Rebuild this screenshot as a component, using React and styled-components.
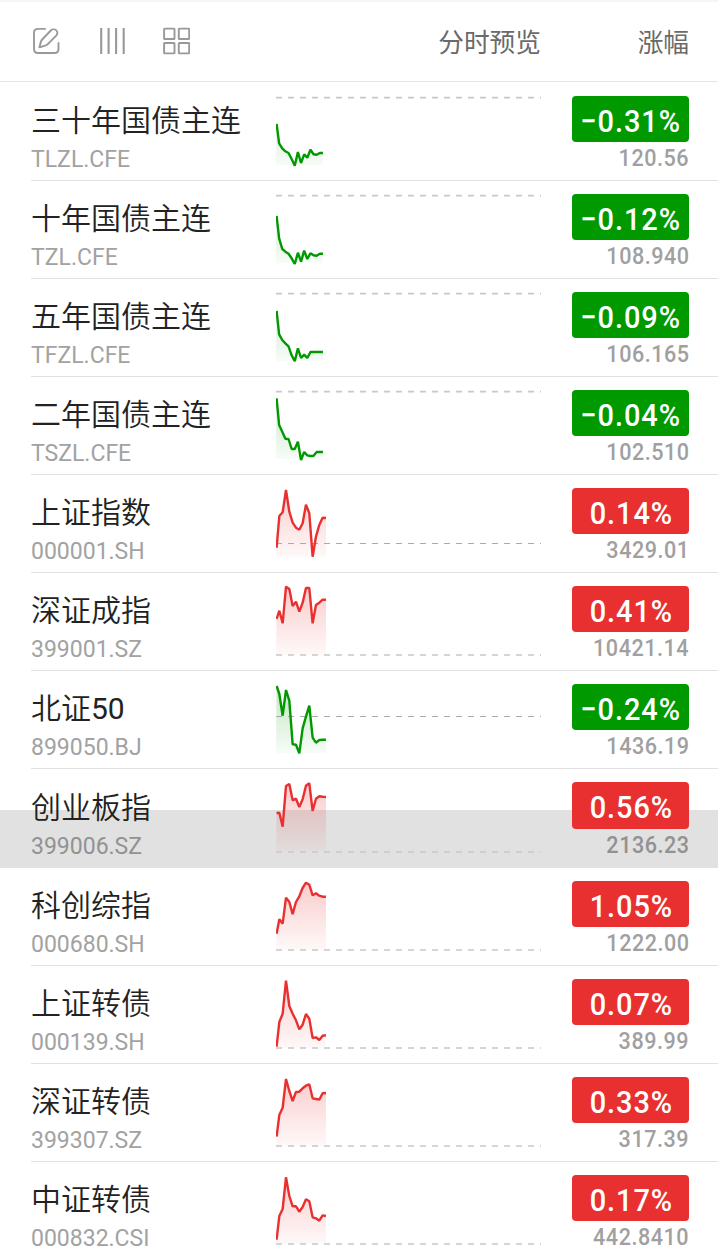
import React from 'react'
import styled, { createGlobalStyle } from 'styled-components'

const RISE = '#e93030'
const FALL = '#009900'
const CHART_WIDTH = 266
const CHART_BOTTOM = 82

const GlobalStyle = createGlobalStyle`
  * {
    box-sizing: border-box;
  }

  body {
    margin: 0;
    background: #fff;
    overflow: hidden;
    font-family: Roboto, 'Noto Sans CJK SC', sans-serif;
  }
`

const Page = styled.main`
  width: 718px;
  height: 1258px;
  overflow: hidden;
  background: #fff;
`

const Header = styled.header`
  display: flex;
  align-items: center;
  height: 82px;
  padding: 0 29px 1px 32px;
  border-top: 2px solid #f5f5f5;
  border-bottom: 1px solid #e6e6e6;
`

const Tools = styled.div`
  display: flex;
  align-items: center;
  gap: 37px;
  flex: 1;
`

const ToolButton = styled.button`
  display: flex;
  padding: 0;
  border: 0;
  background: none;
  color: #999;

  svg {
    display: block;
  }
`

const ColumnTitle = styled.span`
  width: ${props => props.$width}px;
  font-family: 'Noto Sans CJK SC', sans-serif;
  font-size: 25.7px;
  line-height: 40px;
  text-align: right;
  white-space: nowrap;
  color: #6a6a6a;
`

const List = styled.ul`
  margin: 0;
  padding: 1px 0 0;
  list-style: none;
`

const Row = styled.li`
  height: ${props => (props.$pressed ? 99 : 98)}px;
  padding-left: 31px;
  background: ${props => (props.$pressed ? 'linear-gradient(#fff 41px, #e1e1e1 41px)' : '#fff')};
`

const RowContent = styled.div`
  display: grid;
  grid-template-columns: 245px ${CHART_WIDTH}px 1fr;
  height: 100%;
  border-bottom: 1px solid #e1e1e1;
`

const Security = styled.div`
  display: flex;
  flex-direction: column;
  padding: ${props => (props.$pressed ? 19 : 18)}px 0 0;
`

const Name = styled.span`
  font-family: Roboto, 'Noto Sans CJK SC', sans-serif;
  font-size: 30px;
  font-weight: 350;
  line-height: 40px;
  white-space: nowrap;
  color: #222;
`

const Digits = styled.span`
  font-weight: 400;
`

const Code = styled.span`
  margin-top: 5px;
  font-size: 23px;
  font-weight: 400;
  line-height: 28px;
  color: ${props => (props.$pressed ? '#929292' : '#a2a2a2')};
`

const Chart = styled.svg`
  display: block;
`

const Quote = styled.div`
  display: flex;
  flex-direction: column;
  align-items: flex-end;
  padding: 13px 29px 0 0;
`

const Badge = styled.div`
  display: flex;
  justify-content: center;
  width: 117px;
  height: ${props => (props.$pressed ? 47 : 46)}px;
  padding-left: 1px;
  border-radius: 4px;
  background: ${props => props.$color};
`

const Change = styled.span`
  color: #fff;
  font-size: 31.5px;
  font-weight: 500;
  line-height: ${props => (props.$pressed ? 52 : 51)}px;
  letter-spacing: 1px;
  white-space: nowrap;
  transform: scaleX(0.92);
`

const Price = styled.span`
  margin-top: 2px;
  margin-right: -0.5px;
  font-size: 24.5px;
  font-weight: 500;
  line-height: 28px;
  letter-spacing: 0.6px;
  color: ${props => (props.$pressed ? '#929292' : '#a0a0a0')};
  transform: scaleX(0.88);
  transform-origin: right center;
`

// points hold one y value per minute, base is the previous close line
const securities = [
  { name: '三十年国债主连', code: 'TLZL.CFE', change: '−0.31%', price: '120.56', base: 14.7, points: [41, 60.3, 65.3, 68.3, 70, 76, 82.7, 69, 80, 71.3, 74.7, 66.7, 71.3, 71.7, 70, 70] },
  { name: '十年国债主连', code: 'TZL.CFE', change: '−0.12%', price: '108.940', base: 14.7, points: [35, 57.3, 68, 70.7, 72.7, 77.3, 83, 71.7, 80.7, 69.7, 78, 72.3, 74.3, 74.7, 72.7, 72.7] },
  { name: '五年国债主连', code: 'TFZL.CFE', change: '−0.09%', price: '106.165', base: 14.7, points: [32, 55.3, 61, 64.3, 67.3, 76.3, 82.3, 69.3, 79, 75.7, 79, 73, 73, 73, 73, 73] },
  { name: '二年国债主连', code: 'TSZL.CFE', change: '−0.04%', price: '102.510', base: 14.7, points: [21.3, 48, 54.7, 61.7, 62, 72, 72, 64.7, 83, 75, 78.3, 79, 78.7, 75, 75, 75] },
  { name: '上证指数', code: '000001.SH', change: '0.14%', price: '3429.01', base: 68.5, thin: true, points: [72.7, 41, 37.3, 15, 36.7, 47.7, 52.7, 54.7, 48.3, 29.7, 38.3, 81.7, 61.7, 50, 42.7, 43] },
  { name: '深证成指', code: '399001.SZ', change: '0.41%', price: '10421.14', base: 82, points: [46, 37.7, 50.3, 13.7, 16, 33, 28.7, 38.7, 29.7, 15, 15, 50.3, 32, 29.7, 26.7, 26.7] },
  { name: '北证', digits: '50', code: '899050.BJ', change: '−0.24%', price: '1436.19', base: 45.5, thin: true, points: [15, 23, 44.7, 19, 29.7, 73.3, 73.7, 82.3, 57.3, 45.7, 34.7, 66.7, 71.7, 69, 68.7, 68.7] },
  { name: '创业板指', code: '399006.SZ', change: '0.56%', price: '2136.23', base: 83, pressed: true, points: [44, 43.7, 57.7, 17, 15, 31.3, 29.7, 38, 30.3, 16.7, 14.3, 42, 29.7, 27.3, 27.7, 28] },
  { name: '科创综指', code: '000680.SH', change: '1.05%', price: '1222.00', base: 82, points: [65.7, 51.3, 55.7, 29.7, 34, 46.3, 34, 28.3, 20, 14.7, 16.7, 27.3, 25.3, 27.7, 28.7, 28.7] },
  { name: '上证转债', code: '000139.SH', change: '0.07%', price: '389.99', base: 82, points: [80.7, 56, 47.7, 14.7, 40, 47.7, 54.3, 63.3, 58.7, 48, 52.7, 72, 71.3, 74, 69.7, 69.3] },
  { name: '深证转债', code: '399307.SZ', change: '0.33%', price: '317.39', base: 82, points: [72.7, 51, 43.7, 15, 27, 37, 28, 27.7, 24.3, 21.7, 20.3, 34.3, 35, 35.7, 29.3, 29] },
  { name: '中证转债', code: '000832.CSI', change: '0.17%', price: '442.8410', base: 82, points: [77.7, 54, 47, 15.3, 34, 44.3, 44.3, 49.7, 45, 37.3, 39.3, 55.3, 56.3, 58.7, 53.3, 54] }
]

const EditIcon = () => (
  <svg width='28' height='28' viewBox='0 0 28 28' fill='none' stroke='currentColor' strokeWidth='1.9' strokeLinecap='round' strokeLinejoin='round'>
    <path d='M13 1.9H6Q2 1.9 2 5.9V22Q2 26 6 26H22.5Q26.5 26 26.5 22V16' />
    <path d='M7.4 20.3L9 14.5Q9.4 13.4 10.2 12.5L18.8 3.5C20.3 2 22.8 2 24.3 3.4C25.8 4.8 25.7 7.1 24.2 8.7L15.8 17.2Q15 18 13.9 18.4Z' />
  </svg>
)

const ColumnsIcon = () => (
  <svg width='28' height='28' viewBox='0 0 28 28' stroke='currentColor' strokeWidth='2.1'>
    <path d='M4.2 1V27M11.6 1V27M19.1 1V27M26.7 1V27' />
  </svg>
)

const GridIcon = () => (
  <svg width='28' height='28' viewBox='0 0 28 28' fill='none' stroke='currentColor' strokeWidth='1.9'>
    <rect x='2.1' y='1.6' width='10.4' height='10.4' rx='0.6' />
    <rect x='16.8' y='1.6' width='10.4' height='10.4' rx='0.6' />
    <rect x='2.1' y='16' width='10.4' height='10.4' rx='0.6' />
    <rect x='16.8' y='16' width='10.4' height='10.4' rx='0.6' />
  </svg>
)

const Sparkline = ({ id, points, base, thin, color, step }) => {
  const line = points.map((y, i) => `${i === 0 ? 0.6 : (i * step).toFixed(2)},${y}`).join(' L')
  const end = (points.length - 1) * step

  return (
    <Chart width={CHART_WIDTH} height='97' viewBox={`0 0 ${CHART_WIDTH} 97`}>
      <defs>
        <linearGradient id={id} gradientUnits='userSpaceOnUse' x1='0' y1='14' x2='0' y2={CHART_BOTTOM}>
          <stop offset='0' stopColor={color} stopOpacity='0.25' />
          <stop offset='1' stopColor={color} stopOpacity='0.03' />
        </linearGradient>
      </defs>
      <path d={`M0,${CHART_BOTTOM} L${line} L${end},${CHART_BOTTOM} Z`} fill={`url(#${id})`} />
      <path
        d={`M0 ${base}H265`}
        stroke={thin ? '#aaa' : '#c8c8c8'}
        strokeWidth={thin ? 1 : 1.7}
        strokeDasharray='6 6'
      />
      <path d={`M${line}`} fill='none' stroke={color} strokeWidth='2.4' strokeLinejoin='bevel' />
    </Chart>
  )
}

const SecurityRow = ({ security }) => {
  const { name, digits, code, change, price, base, thin, pressed, points } = security
  const color = change.startsWith('−') ? FALL : RISE
  const step = code.endsWith('.CFE') ? 3.13 : 3.33

  return (
    <Row $pressed={pressed}>
      <RowContent>
        <Security $pressed={pressed}>
          <Name>{name}{digits && <Digits>{digits}</Digits>}</Name>
          <Code $pressed={pressed}>{code}</Code>
        </Security>
        <Sparkline id={`fill-${code}`} points={points} base={base} thin={thin} color={color} step={step} />
        <Quote>
          <Badge $color={color} $pressed={pressed}>
            <Change $pressed={pressed}>{change}</Change>
          </Badge>
          <Price $pressed={pressed}>{price}</Price>
        </Quote>
      </RowContent>
    </Row>
  )
}

const App = () => (
  <Page>
    <GlobalStyle />
    <Header>
      <Tools>
        <ToolButton aria-label='编辑'><EditIcon /></ToolButton>
        <ToolButton aria-label='列'><ColumnsIcon /></ToolButton>
        <ToolButton aria-label='宫格'><GridIcon /></ToolButton>
      </Tools>
      <ColumnTitle $width={120}>分时预览</ColumnTitle>
      <ColumnTitle $width={148}>涨幅</ColumnTitle>
    </Header>
    <List>
      {securities.map(security => (
        <SecurityRow key={security.code} security={security} />
      ))}
    </List>
  </Page>
)

export default App
